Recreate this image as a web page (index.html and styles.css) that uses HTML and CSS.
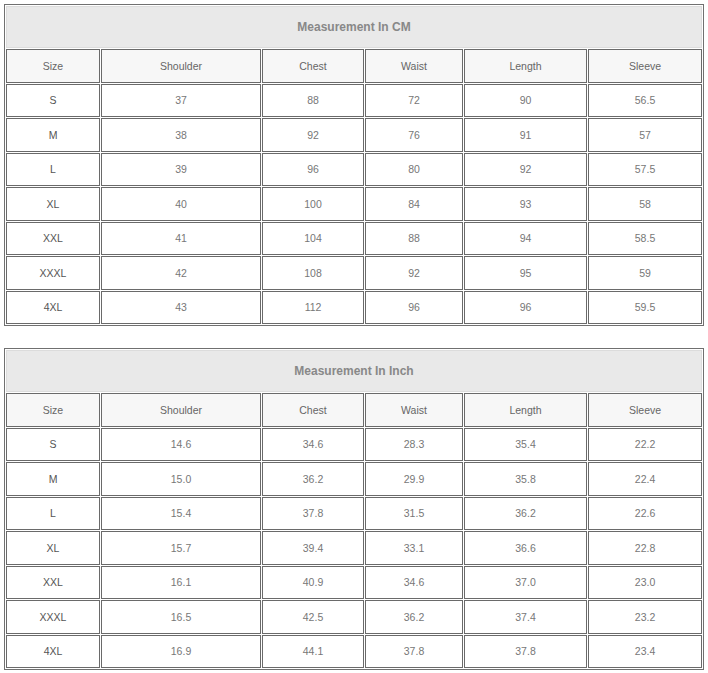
FILE: index.html
```html
<!DOCTYPE html>
<html>
<head>
<meta charset="utf-8">
<link rel="stylesheet" href="styles.css">
</head>
<body>
<table class="size-table">
  <colgroup>
    <col class="c-size"><col class="c-shoulder"><col class="c-chest"><col class="c-waist"><col class="c-length"><col class="c-sleeve">
  </colgroup>
  <tr><td class="title" colspan="6">Measurement In CM</td></tr>
  <tr class="head"><td>Size</td><td>Shoulder</td><td>Chest</td><td>Waist</td><td>Length</td><td>Sleeve</td></tr>
  <tr><td class="sz">S</td><td>37</td><td>88</td><td>72</td><td>90</td><td>56.5</td></tr>
  <tr><td class="sz">M</td><td>38</td><td>92</td><td>76</td><td>91</td><td>57</td></tr>
  <tr><td class="sz">L</td><td>39</td><td>96</td><td>80</td><td>92</td><td>57.5</td></tr>
  <tr><td class="sz">XL</td><td>40</td><td>100</td><td>84</td><td>93</td><td>58</td></tr>
  <tr><td class="sz">XXL</td><td>41</td><td>104</td><td>88</td><td>94</td><td>58.5</td></tr>
  <tr><td class="sz">XXXL</td><td>42</td><td>108</td><td>92</td><td>95</td><td>59</td></tr>
  <tr><td class="sz">4XL</td><td>43</td><td>112</td><td>96</td><td>96</td><td>59.5</td></tr>
</table>
<table class="size-table">
  <colgroup>
    <col class="c-size"><col class="c-shoulder"><col class="c-chest"><col class="c-waist"><col class="c-length"><col class="c-sleeve">
  </colgroup>
  <tr><td class="title" colspan="6">Measurement In Inch</td></tr>
  <tr class="head"><td>Size</td><td>Shoulder</td><td>Chest</td><td>Waist</td><td>Length</td><td>Sleeve</td></tr>
  <tr><td class="sz">S</td><td>14.6</td><td>34.6</td><td>28.3</td><td>35.4</td><td>22.2</td></tr>
  <tr><td class="sz">M</td><td>15.0</td><td>36.2</td><td>29.9</td><td>35.8</td><td>22.4</td></tr>
  <tr><td class="sz">L</td><td>15.4</td><td>37.8</td><td>31.5</td><td>36.2</td><td>22.6</td></tr>
  <tr><td class="sz">XL</td><td>15.7</td><td>39.4</td><td>33.1</td><td>36.6</td><td>22.8</td></tr>
  <tr><td class="sz">XXL</td><td>16.1</td><td>40.9</td><td>34.6</td><td>37.0</td><td>23.0</td></tr>
  <tr><td class="sz">XXXL</td><td>16.5</td><td>42.5</td><td>36.2</td><td>37.4</td><td>23.2</td></tr>
  <tr><td class="sz">4XL</td><td>16.9</td><td>44.1</td><td>37.8</td><td>37.8</td><td>23.4</td></tr>
</table>
</body>
</html>
```

FILE: styles.css
```css
html, body {
  margin: 0;
  padding: 0;
  background: #fff;
}
body {
  padding: 4px 0 0 4px;
  font-family: "Liberation Sans", Arial, sans-serif;
}
.size-table {
  width: 700px;
  table-layout: fixed;
  border-collapse: separate;
  border-spacing: 1px;
  border: 1px solid #707070;
  margin-bottom: 22px;
}
.c-size { width: 94px; }
.c-shoulder { width: 160px; }
.c-chest { width: 102px; }
.c-waist { width: 98px; }
.c-length { width: 123px; }
.c-sleeve { width: 114px; }
.size-table td {
  box-sizing: border-box;
  border: 1px solid #6a6a6a;
  height: 33.5px;
  padding: 0;
  text-align: center;
  vertical-align: middle;
  font-size: 10.5px;
  color: #777;
  background: #fff;
}
.size-table td.sz {
  color: #555;
}
.size-table .head td {
  background: #f7f7f7;
  color: #666;
}
.size-table td.title {
  height: 42px;
  background: #e9e9e9;
  border: 1px solid #dcdcdc;
  color: #888;
  font-size: 12px;
  font-weight: bold;
}
```
